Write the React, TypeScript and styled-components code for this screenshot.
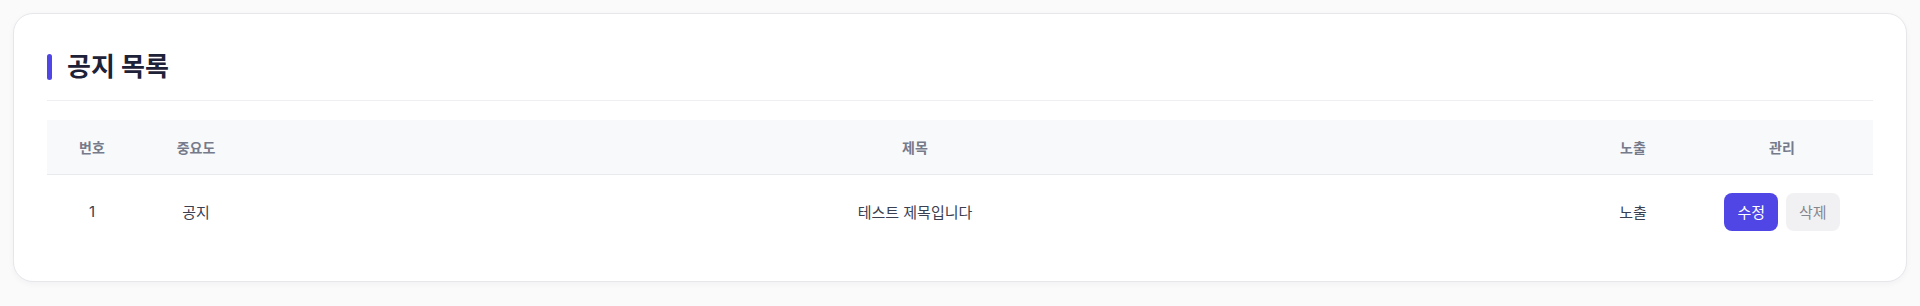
import React from 'react';
import styled, { createGlobalStyle } from 'styled-components';

interface Notice {
  id: number;
  level: string;
  title: string;
  visible: boolean;
}

const notices: Notice[] = [{ id: 1, level: '공지', title: '테스트 제목입니다', visible: true }];

const columns = [
  { label: '번호', width: 90 },
  { label: '중요도', width: 118 },
  { label: '제목', width: 0 },
  { label: '노출', width: 116 },
  { label: '관리', width: 182 },
];

export default function App() {
  return (
    <>
      <GlobalStyle />
      <Page>
        <Card>
          <Header>
            <Title>공지 목록</Title>
          </Header>
          <Table>
            <colgroup>
              {columns.map(col => (
                <Col key={col.label} $width={col.width} />
              ))}
            </colgroup>
            <thead>
              <tr>
                {columns.map(col => (
                  <Th key={col.label}>{col.label}</Th>
                ))}
              </tr>
            </thead>
            <tbody>
              {notices.map(notice => (
                <tr key={notice.id}>
                  <Td>{notice.id}</Td>
                  <Td>{notice.level}</Td>
                  <Td>{notice.title}</Td>
                  <Td>{notice.visible ? '노출' : '숨김'}</Td>
                  <Td>
                    <Actions>
                      <Button $variant="primary">수정</Button>
                      <Button $variant="muted">삭제</Button>
                    </Actions>
                  </Td>
                </tr>
              ))}
            </tbody>
          </Table>
        </Card>
      </Page>
    </>
  );
}

const GlobalStyle = createGlobalStyle`
  * {
    box-sizing: border-box;
  }

  body {
    margin: 0;
    background: #fafafb;
    font-family: Inter, 'Noto Sans CJK KR', sans-serif;
  }
`;

const Page = styled.main`
  height: 306px;
  padding: 13px 13px;
`;

const Card = styled.section`
  background: #ffffff;
  border: 1px solid #e6e7eb;
  border-radius: 20px;
  box-shadow: 0 2px 6px rgba(17, 24, 39, 0.04);
  padding: 32px 33px;
`;

const Header = styled.div`
  border-bottom: 1px solid #eeeff2;
  margin-bottom: 19px;
  padding-bottom: 13px;
`;

const Title = styled.h1`
  align-items: center;
  color: #1e2238;
  display: flex;
  font-size: 26px;
  font-weight: 700;
  gap: 15px;
  line-height: 41px;
  margin: 0;

  &::before {
    background: #4f46e5;
    border-radius: 3px;
    content: '';
    display: block;
    height: 26px;
    width: 5px;
  }
`;

const Table = styled.table`
  border-collapse: collapse;
  table-layout: fixed;
  width: 100%;
`;

const Col = styled.col<{ $width: number }>`
  width: ${({ $width }) => ($width ? `${$width}px` : 'auto')};
`;

const Th = styled.th`
  background: #f8f9fb;
  border-bottom: 1px solid #e8eaee;
  color: #767b8b;
  font-size: 14px;
  font-weight: 600;
  height: 54px;
  padding: 0 8px;
  text-align: center;
`;

const Td = styled.td`
  color: #3b4050;
  font-size: 15px;
  height: 75px;
  padding: 0 8px;
  text-align: center;
`;

const Actions = styled.div`
  display: flex;
  gap: 8px;
  justify-content: center;
`;

const Button = styled.button<{ $variant: 'primary' | 'muted' }>`
  background: ${({ $variant }) => ($variant === 'primary' ? '#4f46e5' : '#f1f1f3')};
  border: none;
  border-radius: 8px;
  color: ${({ $variant }) => ($variant === 'primary' ? '#ffffff' : '#85878f')};
  cursor: pointer;
  font-family: inherit;
  font-size: 15px;
  height: 38px;
  padding: 0 13px;
`;
